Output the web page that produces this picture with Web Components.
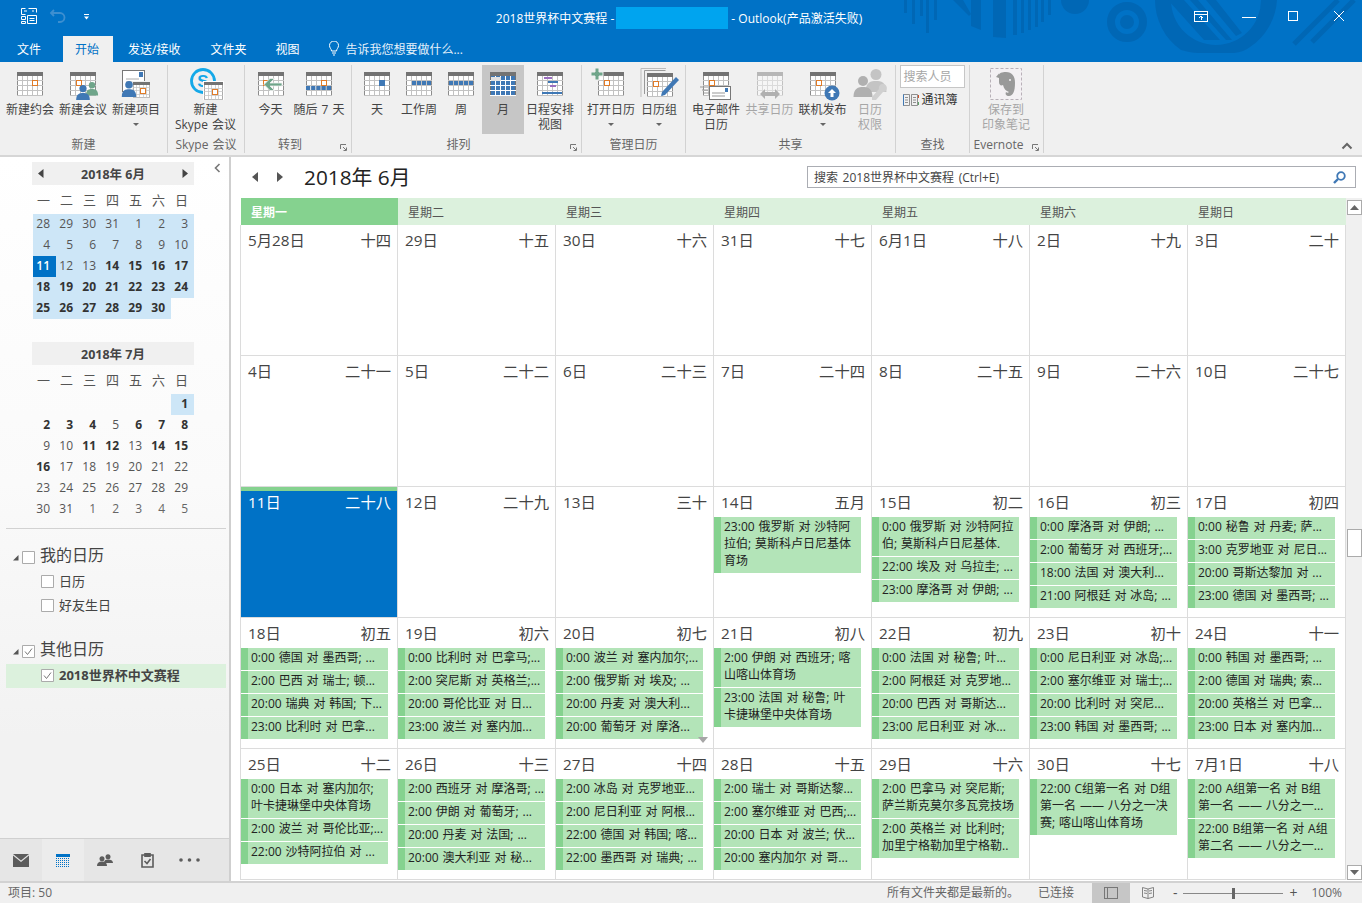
<!DOCTYPE html>
<html lang="zh">
<head>
<meta charset="utf-8">
<title>Outlook</title>
<style>
	html, body { margin: 0; height: 100%; overflow: hidden; background: #fff; }
	body { font-family: "Open Sans", "Noto Sans CJK SC", sans-serif; font-size: 12px; color: #444; }
	ol-app { height: 903px; }
</style>
</head>
<body>
<ol-app>
	<ol-titlebar></ol-titlebar>
	<ol-tabs></ol-tabs>
	<ol-ribbon>
		<rb-group label="新建" width="168">
			<rb-button width="53" label="新建约会" icon="appt"></rb-button>
			<rb-button width="53" label="新建会议" icon="meeting"></rb-button>
			<rb-button width="53" label="新建项目" icon="item" caret></rb-button>
		</rb-group>
		<rb-group label="Skype 会议" width="77">
			<rb-button width="76" label="新建&#10;Skype 会议" icon="skype"></rb-button>
		</rb-group>
		<rb-group label="转到" width="107" launcher>
			<rb-button width="43" label="今天" icon="today"></rb-button>
			<rb-button width="54" label="随后 7 天" icon="next7"></rb-button>
		</rb-group>
		<rb-group label="排列" width="230" launcher>
			<rb-button width="42" label="天" icon="day"></rb-button>
			<rb-button width="42" label="工作周" icon="workweek"></rb-button>
			<rb-button width="42" label="周" icon="week"></rb-button>
			<rb-button width="42" label="月" icon="month" active></rb-button>
			<rb-button width="52" label="日程安排&#10;视图" icon="schedule"></rb-button>
		</rb-group>
		<rb-group label="管理日历" width="104">
			<rb-button width="52" label="打开日历" icon="open" caret></rb-button>
			<rb-button width="44" label="日历组" icon="groups" caret></rb-button>
		</rb-group>
		<rb-group label="共享" width="210">
			<rb-button width="54" label="电子邮件&#10;日历" icon="email"></rb-button>
			<rb-button width="53" label="共享日历" icon="share" disabled></rb-button>
			<rb-button width="53" label="联机发布" icon="publish" caret></rb-button>
			<rb-button width="42" label="日历&#10;权限" icon="perm" disabled></rb-button>
		</rb-group>
		<rb-group label="查找" width="74"><rb-find></rb-find></rb-group>
		<rb-group label="Evernote" width="74" launcher>
			<rb-button width="66" label="保存到&#10;印象笔记" icon="evernote" disabled></rb-button>
		</rb-group>
	</ol-ribbon>
	<ol-body>
		<ol-sidebar>
			<mini-month title-text="2018年 6月" arrows></mini-month>
			<mini-month title-text="2018年 7月" july></mini-month>
		</ol-sidebar>
		<ol-main></ol-main>
	</ol-body>
	<ol-status></ol-status>
</ol-app>

<script>
const tpl = (css, html) => {
	const t = document.createElement('template');
	t.innerHTML = `<style>${css}</style>${html}`;
	return t;
};

/* ---------- ribbon icons ---------- */
const cal = (x, y, o = {}) => {
	const c = o.color || '#8c8c8c', top = o.top || '#737373', line = o.line || '#c2c2c2';
	let s = `<g shape-rendering="crispEdges"><rect x="${x + .5}" y="${y + .5}" width="25" height="23" fill="#fff" stroke="${c}"/>`;
	for (let i = 5; i < 25; i += 5) s += `<path d="M${x + i + .5} ${y + 4}v20" stroke="${line}"/>`;
	for (let i = 8; i < 24; i += 5) s += `<path d="M${x} ${y + i + .5}h26" stroke="${line}"/>`;
	s += `<rect x="${x}" y="${y}" width="26" height="4" fill="${top}"/></g>`;
	return s;
};
const orange = (x, y) => `<rect x="${x + .5}" y="${y + .5}" width="5" height="5" fill="#fff" stroke="#e07b28" stroke-width="1.2" shape-rendering="crispEdges"/>`;
const person = (cx, top, r, col) => `<circle cx="${cx}" cy="${top + r}" r="${r}" fill="${col}"/><path d="M${cx - r * 1.9} ${top + r * 4.2}c0-${r * 1.8} ${r}-${r * 2} ${r * 1.9}-${r * 2}s${r * 1.9} ${r * .2} ${r * 1.9} ${r * 2}z" fill="${col}"/>`;
const blue = '#3f78b5';
const envelope = (x, y, w, h) => `<rect x="${x + .5}" y="${y + .5}" width="${w}" height="${h}" fill="#fff" stroke="#777"/><rect x="${x + w - 5}" y="${y + 2}" width="3" height="4" fill="${blue}"/><path d="M${x + 3} ${y + h - 6}h${w - 8}M${x + 3} ${y + h - 3}h${w - 8}" stroke="#999"/>`;
const dashes = (x, y, n, w) => { let s = ''; for (let i = 0; i < n; i++) s += `<rect x="${x + i * (w + 1)}" y="${y}" width="${w}" height="4" fill="${blue}"/>`; return s; };

const ICONS = {
	appt: cal(9, 4) + orange(24, 12),
	meeting: cal(9, 4) + orange(15, 12) + person(31, 14, 3.2, '#6fa58a') + person(22, 17, 3.6, blue),
	item: `<rect x="8.500" y="2.500" width="22" height="21" fill="#fff" stroke="#777"/><rect x="25" y="4" width="4" height="5" fill="${blue}"/><path d="M12 11h13M12 14h13" stroke="#aaa"/>` + `<rect x="18" y="13" width="19" height="18" fill="#f0f0f0"/><g transform="translate(19 14) scale(.66)">${cal(0, 0)}</g>` + orange(26, 20) + person(15, 13, 3.8, blue),
	skype: `<circle cx="19" cy="13" r="11.500" fill="none" stroke="#14a8e8" stroke-width="2.800"/><text x="19" y="19" text-anchor="middle" font-family="Liberation Sans" font-weight="700" font-size="17" fill="#14a8e8">S</text><rect x="19" y="13" width="21" height="19" fill="#fff"/><g transform="translate(20 14) scale(.73)">${cal(0, 0)}</g>` + orange(28, 21),
	today: cal(9, 4) + orange(14, 12) + `<path d="M21 15h12v3H21l4.500 4.500h-4.500L15 16.500 21 10.500h4.500z" fill="#6fa58a" stroke="#f0f0f0" stroke-width=".8"/>`,
	next7: cal(9, 4) + orange(24, 12) + dashes(9, 18, 5, 4.200),
	day: cal(9, 4) + `<rect x="24" y="12" width="6" height="6" fill="${blue}"/>`,
	workweek: cal(9, 4) + dashes(15, 13, 4, 4),
	week: cal(9, 4) + dashes(10, 13, 5, 4),
	month: cal(9, 4, { color: '#737373', line: '#fff' }).replace('fill="#fff"', `fill="${blue}"`) + `<rect x="10" y="9" width="10" height="4" fill="#e3e3e3"/>`,
	schedule: cal(9, 4) + `<rect x="16" y="9" width="8" height="2" fill="#9b6fc0"/><rect x="20" y="13" width="10" height="2" fill="${blue}"/><rect x="22" y="17" width="6" height="2" fill="#9b6fc0"/><rect x="14" y="24" width="20" height="2" fill="${blue}"/>`,
	open: cal(9, 4) + orange(15, 12) + `<path d="M2 4h4V0h4v4h4v4h-4v4H6V8H2z" fill="#6fa58a" stroke="#f0f0f0"/>`,
	groups: `<path d="M7.500 26V2.500h21" fill="none" stroke="#999"/><path d="M5 29V0.500h25" fill="none" stroke="#bbb" transform="translate(-1 0)"/>` + cal(10, 5) + orange(16, 13) + `<path d="M39 9l3 3-14 15-4 1 1-4z" fill="${blue}"/>`,
	email: cal(9, 4) + orange(15, 12) + `<path d="M6 19h8M8 22h6M10 25h6" stroke="#999"/>` + envelope(15, 18, 21, 13),
	share: `<g opacity=".45">${cal(9, 4)}</g><path d="M12 26l5-5v3h10v-3l5 5-5 5v-3H17v3z" fill="#b0b0b0"/>`,
	publish: cal(9, 4) + orange(15, 12) + `<circle cx="31" cy="25" r="7.500" fill="${blue}"/><path d="M31 21l-4 4h2.500v4h3v-4H35z" fill="#fff"/>`,
	perm: person(28, 1, 5.500, '#c4c4c4') + person(15, 8, 5, '#b0b0b0') + `<path d="M24 29l7-8a4 4 0 1 1 4 3l-7 8h-4z" fill="#d0d0d0"/>`,
	evernote: `<rect x="6.500" y="0.500" width="31" height="31" fill="#f3f0f3" stroke="#b8b0b8" stroke-dasharray="3 2"/><path d="M15 7c0-2 3-3 7-3 6 0 9 4 9 11 0 8-2 13-6 13-3 0-4-2-3-4 1 1 2 1 3 0-3-1-5-3-6-7-2 1-4 0-4-3z" fill="#999"/><path d="M12 9l3-3.500V10z" fill="#999"/><circle cx="26" cy="12" r="1" fill="#f3f0f3"/>`,
};

/* ---------- app shell ---------- */
class OlApp extends HTMLElement {
	constructor() {
		super();
		this.attachShadow({ mode: 'open' }).appendChild(OlApp.template.content.cloneNode(true));
	}
}
OlApp.template = tpl(`:host { display: flex; flex-direction: column; width: 1362px; background: #0072c6; }`, `<slot></slot>`);

class OlTitlebar extends HTMLElement {
	constructor() {
		super();
		this.attachShadow({ mode: 'open' }).appendChild(OlTitlebar.template.content.cloneNode(true));
	}
}
OlTitlebar.template = tpl(`
	:host { display: block; position: relative; height: 36px; color: #fff; }
	.pattern { position: absolute; right: 0; top: 0; }
	.bar { position: relative; box-sizing: border-box; height: 36px; padding-right: 4px; display: flex; align-items: center; justify-content: center; font-size: 12px; }
	.mask { width: 112px; height: 22px; background: #00a4ef; margin-left: 2px; }
	.qat { position: absolute; left: 0; top: 0; }
	.win { position: absolute; right: 2px; top: 0; }
`, `
	<svg class="pattern" width="462" height="62" viewBox="900 0 462 62" fill="#0067b5">
		<path d="M904 0h3v13h-3zM912 0h3v24h-3zM920 0h3v16h-3zM926 0h3v33h-3zM934 0h3v20h-3z"/>
		<path d="M953 0h10l8 14-2 2zM971 0h10v30l-10-4zM993 0h13v38l-13-1zM1013 0h4v35h-4zM1021 0h3v33h-3zM1028 0h3v30h-3zM1035 0h3v27h-3zM1041 0h3v22h-3zM1048 0h3v15h-3z"/>
		<path d="M1061 0h28a14 14 0 0 1-28 0z"/>
		<circle cx="1127" cy="22" r="16" fill="none" stroke="#0067b5" stroke-width="8"/><circle cx="1127" cy="22" r="7"/>
		<path d="M1155 0a61 61 0 0 0 26 50q10 3 17 3h36q10-1 16-6a61 61 0 0 0 27-47h-16a45 45 0 0 1-90 0z"/>
		<path d="M1168 0l36 40h16l-36-40zM1190 0l36 40h6l-34-40zM1206 0l30 36 6-3-26-33z"/>
		<path d="M1294 44l44-44M1312 42l42-42" stroke="#0067b5" stroke-width="5" fill="none"/>
	</svg>
	<svg class="qat" width="100" height="36" fill="none" stroke="#fff">
		<path d="M25.500 8.500h-4v6h4M24 11h3M28.500 8.500h8v4M32 11h2" stroke-width="1"/>
		<path d="M21.500 16.500h4v3h-4zM21.500 21.500h4v2h-4zM27.500 15.500h9v8h-9zM29.500 18.500h5M29.500 20.500h5" stroke-width="1"/>
		<path d="M54 10l-3 3 3 3M51.500 13H60a4.500 4.500 0 0 1 0 9h-2" stroke="#3d8fd0" stroke-width="1.800"/>
		<path d="M84 14.500h5" stroke-width="1"/><path d="M84 16.500h5l-2.500 3z" fill="#fff" stroke="none"/>
	</svg>
	<div class="bar"><span>2018世界杯中文赛程 -</span><span class="mask"></span><span>&nbsp;- Outlook(产品激活失败)</span></div>
	<svg class="win" width="180" height="36" fill="none" stroke="#fff" shape-rendering="crispEdges">
		<path d="M14.500 11.500h13v10h-13zM14.500 14.500h13M21 20v-4M19 18l2-2 2 2" stroke-width="1"/>
		<path d="M62 17h14" stroke-width="1"/>
		<rect x="108.500" y="11.500" width="9" height="9"/>
		<path d="M154 11l10 10M164 11l-10 10" stroke-width="1" shape-rendering="auto"/>
	</svg>
`);

class OlTabs extends HTMLElement {
	constructor() {
		super();
		this.attachShadow({ mode: 'open' }).appendChild(OlTabs.template.content.cloneNode(true));
	}
}
OlTabs.template = tpl(`
	:host { display: flex; align-items: stretch; height: 26px; color: #fff; font-size: 12px; position: relative; }
	span { display: flex; align-items: center; padding: 0 14px; }
	.file { padding: 0 22px 0 17px; }
	.on { background: #f0f0f0; color: #0072c6; padding: 0 14px 0 12px; }
	.tell { padding: 0 0 0 1px; margin-left: 14px; gap: 5px; color: #e4f0fa; }
	svg { display: block; }
`, `
	<span class="file">文件</span><span class="on">开始</span><span style="padding-left:15px">发送/接收</span><span style="padding-left:16px">文件夹</span><span style="padding-left:15px">视图</span>
	<span class="tell"><svg width="12" height="15" fill="none" stroke="#fff"><path d="M3.500 10c0-2-2-3-2-5.500a4.500 4.500 0 0 1 9 0c0 2.500-2 3.500-2 5.500zM4 12h4M5 14h2"/></svg>告诉我您想要做什么...</span>
`);

class OlRibbon extends HTMLElement {
	constructor() {
		super();
		this.attachShadow({ mode: 'open' }).appendChild(OlRibbon.template.content.cloneNode(true));
	}
}
OlRibbon.template = tpl(`
	:host { display: flex; position: relative; box-sizing: border-box; height: 95px; padding-top: 3px; background: #f0f0f0; border-bottom: 2px solid #d6d6d6; }
	svg { position: absolute; right: 9px; bottom: 5px; }
`, `<slot></slot><svg width="12" height="8" fill="none" stroke="#666" stroke-width="2"><path d="M1.500 6.500L6 2l4.500 4.500"/></svg>`);

class RbGroup extends HTMLElement {
	constructor() {
		super();
		this.attachShadow({ mode: 'open' }).appendChild(RbGroup.template.content.cloneNode(true));
	}
	connectedCallback() {
		this.style.width = `${this.getAttribute('width')}px`;
		this.shadowRoot.querySelector('.name').textContent = this.getAttribute('label');
	}
}
RbGroup.template = tpl(`
	:host { display: flex; flex-direction: column; position: relative; box-sizing: border-box; height: 88px; border-right: 1px solid #d2d2d2; }
	.body { display: flex; justify-content: center; box-sizing: border-box; height: 72px; padding-right: 1px; }
	.name { text-align: center; line-height: 16px; color: #666; white-space: nowrap; word-spacing: 1px; }
	:host([launcher]) .name { padding-right: 16px; }
	.launch { display: none; position: absolute; right: 3px; bottom: 1px; }
	:host([launcher]) .launch { display: block; }
`, `
	<div class="body"><slot></slot></div>
	<div class="name"></div>
	<svg class="launch" width="8" height="8" fill="none" stroke="#777"><path d="M.500 5V.500H6"/><path d="M3 3l3 3M3.500 6.500h3v-3"/></svg>
`);

class RbButton extends HTMLElement {
	constructor() {
		super();
		this.attachShadow({ mode: 'open' }).appendChild(RbButton.template.content.cloneNode(true));
	}
	connectedCallback() {
		this.style.width = `${this.getAttribute('width')}px`;
		const root = this.shadowRoot;
		root.querySelector('svg').innerHTML = ICONS[this.getAttribute('icon')] || '';
		root.querySelector('.label').textContent = this.getAttribute('label');
		root.querySelector('.caret').hidden = !this.hasAttribute('caret');
	}
}
RbButton.template = tpl(`
	:host { display: flex; flex-direction: column; align-items: center; height: 69px; color: #444; }
	:host([active]) { background: #c6c6c6; }
	:host([disabled]) { color: #a6a6a6; }
	svg { display: block; margin-top: 3px; flex: none; overflow: visible; }
	.label { line-height: 15px; white-space: pre; text-align: center; word-spacing: 1px; }
	.caret { width: 0; height: 0; margin-top: 6px; border: 3px solid transparent; border-top: 3px solid #666; border-bottom: 0; }
	[hidden] { display: none; }
`, `<svg width="44" height="34"></svg><div class="label"></div><div class="caret"></div>`);

class RbFind extends HTMLElement {
	constructor() {
		super();
		this.attachShadow({ mode: 'open' }).appendChild(RbFind.template.content.cloneNode(true));
	}
}
RbFind.template = tpl(`
	:host { display: flex; flex-direction: column; align-items: flex-start; width: 65px; }
	.box { box-sizing: border-box; width: 65px; height: 23px; background: #fff; border: 1px solid #c6c6c6; color: #a6a6a6; padding-left: 3px; line-height: 21px; }
	.book { display: flex; align-items: center; gap: 3px; margin: 1px 0 0 3px; line-height: 22px; color: #333; }
`, `
	<div class="box">搜索人员</div>
	<div class="book"><svg width="16" height="12" fill="none" stroke="#777"><path d="M.500.500h6v11h-6zM8.500.500h6v11h-6zM2 3.500h3M2 6h3M2 8.500h3M10 3.500h3M10 6h3M10 8.500h3" stroke-width=".8"/><path d="M.500.500v11" stroke="#3f78b5"/><path d="M15.500 1v3" stroke="#d0502a"/><path d="M15.500 8v3" stroke="#5ea56a"/></svg>通讯簿</div>
`);

/* ---------- body ---------- */
class OlBody extends HTMLElement {
	constructor() {
		super();
		this.attachShadow({ mode: 'open' }).appendChild(OlBody.template.content.cloneNode(true));
	}
}
OlBody.template = tpl(`:host { display: flex; height: 725px; background: #fff; }`, `<slot></slot>`);

class OlSidebar extends HTMLElement {
	constructor() {
		super();
		this.attachShadow({ mode: 'open' }).appendChild(OlSidebar.template.content.cloneNode(true));
	}
}
const chk = (on) => `<svg class="chk" width="13" height="13" fill="#fff" stroke="#ababab"><path d="M.500.500h12v12H.500z"/>${on ? '<path d="M3 6.500l2.500 3L10 3.500" fill="none" stroke="#777"/>' : ''}</svg>`;
const tri = `<svg class="tri" width="7" height="7"><path d="M6.500 1v5.500H1z" fill="#555"/></svg>`;
OlSidebar.template = tpl(`
	:host { display: flex; flex-direction: column; position: relative; box-sizing: border-box; width: 231px; padding-top: 5px; border-right: 2px solid #cfcfcf; background: linear-gradient(#fff, #fafafa 45%, #f2f2f2 80%); }
	.months { padding-left: 32px; }
	.collapse { position: absolute; left: 214px; top: 6px; }
	.rule { height: 1px; margin: 6px 3px 0 6px; background: #d2d2d2; }
	.tree { flex: 1; padding: 17px 0 0; }
	.row { display: flex; align-items: center; height: 24px; color: #444; font-size: 13px; padding-left: 41px; gap: 5px; }
	.row span { padding-bottom: 3px; }
	.top { font-size: 16px; padding-left: 12px; gap: 0; }
	.top span { padding-bottom: 7px; }
	.top .chk { margin: 0 5px 0 3px; }
	.gap { margin-top: 22px; }
	.sel { margin: 0 3px 0 6px; padding-left: 35px; background: #dcf1dd; font-weight: 700; }
	.nav { display: flex; height: 42px; background: #e6e6e6; border-top: 1px solid #d0d0d0; }
	.nav div { width: 42px; display: flex; align-items: center; justify-content: center; }
	.nav .on { background: #ececec; }
`, `
	<div class="months"><slot></slot></div>
	<svg class="collapse" width="7" height="10" fill="none" stroke="#777" stroke-width="1.600"><path d="M5.500 1L1.500 5l4 4"/></svg>
	<div class="rule"></div>
	<div class="tree">
		<div class="row top">${tri}${chk(false)}<span>我的日历</span></div>
		<div class="row">${chk(false)}<span>日历</span></div>
		<div class="row">${chk(false)}<span>好友生日</span></div>
		<div class="row top gap">${tri}${chk(true)}<span>其他日历</span></div>
		<div class="row sel">${chk(true)}<span>2018世界杯中文赛程</span></div>
	</div>
	<div class="nav">
		<div><svg width="16" height="13"><path d="M0 0h16L8 6.500z" fill="#5c5c5c"/><path d="M0 1.500l8 6.500 8-6.500V13H0z" fill="#5c5c5c"/></svg></div>
		<div class="on"><svg width="14" height="13" shape-rendering="crispEdges"><path d="M0 0h14v3H0z" fill="#0072c6"/><path d="M0 4.500h14M0 6.500h14M0 8.500h14M0 10.500h14M0 12.500h14" stroke="#0072c6" stroke-dasharray="1 1"/></svg></div>
		<div><svg width="16" height="12" fill="#5c5c5c"><circle cx="11" cy="2.800" r="2.500"/><path d="M7 9c0-2.500 1.500-3.500 4-3.500s5 1 5 3.500z"/><circle cx="5" cy="4.800" r="2.500"/><path d="M0 12c0-3 1.500-4.500 5-4.500s5 1.500 5 4.500z"/></svg></div>
		<div><svg width="13" height="15" fill="none" stroke="#5c5c5c" stroke-width="1.600"><path d="M4 2H1v12h11V2H9"/><path d="M4 .800h5v2.500H4z" fill="#5c5c5c"/><path d="M3.500 8l2.500 2.500L9.500 6"/></svg></div>
		<div><svg width="21" height="4" fill="#5c5c5c"><circle cx="2" cy="2" r="1.800"/><circle cx="10.500" cy="2" r="1.800"/><circle cx="19" cy="2" r="1.800"/></svg></div>
	</div>
`);

class MiniMonth extends HTMLElement {
	constructor() {
		super();
		this.attachShadow({ mode: 'open' }).appendChild(MiniMonth.template.content.cloneNode(true));
	}
	connectedCallback() {
		const root = this.shadowRoot;
		root.querySelector('.title').textContent = this.getAttribute('title-text');
		const july = this.hasAttribute('july');
		const cells = [];
		if (july) {
			const bold = [1, 2, 3, 4, 6, 7, 8, 11, 12, 14, 15, 16];
			for (let i = 0; i < 6; i++) cells.push({ t: '' });
			for (let d = 1; d <= 31; d++) cells.push({ t: d, b: bold.includes(d), s: d === 1 });
			for (let d = 1; d <= 5; d++) cells.push({ t: d, f: true });
		} else {
			[28, 29, 30, 31].forEach((d) => cells.push({ t: d, s: true }));
			for (let d = 1; d <= 30; d++) cells.push({ t: d, s: true, b: d >= 14, n: d === 11 });
		}
		root.querySelector('.week').innerHTML = [...'一二三四五六日'].map((w) => `<span>${w}</span>`).join('');
		root.querySelector('.days').innerHTML = cells.map((c) => `<span class="${c.s ? 's ' : ''}${c.b ? 'b ' : ''}${c.n ? 'n ' : ''}${c.f ? 'f' : ''}">${c.t}</span>`).join('');
	}
}
MiniMonth.template = tpl(`
	:host { display: block; width: 162px; height: 178px; margin-bottom: 2px; }
	.head { display: flex; align-items: center; justify-content: center; position: relative; height: 23px; background: #f0f0f0; font-weight: 700; font-size: 12.500px; color: #444; }
	.arrow { display: none; position: absolute; top: 7px; }
	:host([arrows]) .arrow { display: block; }
	.prev { left: 6px; } .next { right: 6px; }
	.week { display: grid; grid-template-columns: repeat(7, 23px); height: 29px; align-items: center; font-size: 13px; color: #555; text-align: center; }
	.days { display: grid; grid-template-columns: repeat(7, 23px); grid-auto-rows: 21px; margin-left: 1px; line-height: 20px; text-align: right; color: #555; }
	.days span { padding-right: 6px; }
	.s { background: #cde6f7; }
	.b { font-weight: 700; color: #333; }
	.n { background: #0072c6; color: #fff; font-weight: 600; }
	.f { color: #666; }
`, `
	<div class="head">
		<svg class="arrow prev" width="6" height="9"><path d="M5.500 0v9L0 4.500z" fill="#444"/></svg>
		<span class="title"></span>
		<svg class="arrow next" width="6" height="9"><path d="M.500 0v9L6 4.500z" fill="#444"/></svg>
	</div>
	<div class="week"></div>
	<div class="days"></div>
`);

/* ---------- month view ---------- */
const WEEKS = [
	[['5月28日', '十四'], ['29日', '十五'], ['30日', '十六'], ['31日', '十七'], ['6月1日', '十八'], ['2日', '十九'], ['3日', '二十']],
	[['4日', '二十一'], ['5日', '二十二'], ['6日', '二十三'], ['7日', '二十四'], ['8日', '二十五'], ['9日', '二十六'], ['10日', '二十七']],
	[['11日', '二十八'], ['12日', '二十九'], ['13日', '三十'], ['14日', '五月', ['23:00 俄罗斯 对 沙特阿\n拉伯; 莫斯科卢日尼基体\n育场']],
		['15日', '初二', ['0:00 俄罗斯 对 沙特阿拉\n伯; 莫斯科卢日尼基体.', '22:00 埃及 对 乌拉圭; ...', '23:00 摩洛哥 对 伊朗; ...']],
		['16日', '初三', ['0:00 摩洛哥 对 伊朗; ...', '2:00 葡萄牙 对 西班牙;...', '18:00 法国 对 澳大利...', '21:00 阿根廷 对 冰岛; ...']],
		['17日', '初四', ['0:00 秘鲁 对 丹麦; 萨...', '3:00 克罗地亚 对 尼日...', '20:00 哥斯达黎加 对 ...', '23:00 德国 对 墨西哥; ...']]],
	[['18日', '初五', ['0:00 德国 对 墨西哥; ...', '2:00 巴西 对 瑞士; 顿...', '20:00 瑞典 对 韩国; 下...', '23:00 比利时 对 巴拿...']],
		['19日', '初六', ['0:00 比利时 对 巴拿马;...', '2:00 突尼斯 对 英格兰;...', '20:00 哥伦比亚 对 日...', '23:00 波兰 对 塞内加...']],
		['20日', '初七', ['0:00 波兰 对 塞内加尔;...', '2:00 俄罗斯 对 埃及; ...', '20:00 丹麦 对 澳大利...', '20:00 葡萄牙 对 摩洛...'], true],
		['21日', '初八', ['2:00 伊朗 对 西班牙; 喀\n山喀山体育场', '23:00 法国 对 秘鲁; 叶\n卡捷琳堡中央体育场']],
		['22日', '初九', ['0:00 法国 对 秘鲁; 叶...', '2:00 阿根廷 对 克罗地...', '20:00 巴西 对 哥斯达...', '23:00 尼日利亚 对 冰...']],
		['23日', '初十', ['0:00 尼日利亚 对 冰岛;...', '2:00 塞尔维亚 对 瑞士;...', '20:00 比利时 对 突尼...', '23:00 韩国 对 墨西哥; ...']],
		['24日', '十一', ['0:00 韩国 对 墨西哥; ...', '2:00 德国 对 瑞典; 索...', '20:00 英格兰 对 巴拿...', '23:00 日本 对 塞内加...']]],
	[['25日', '十二', ['0:00 日本 对 塞内加尔;\n叶卡捷琳堡中央体育场', '2:00 波兰 对 哥伦比亚;...', '22:00 沙特阿拉伯 对 ...']],
		['26日', '十三', ['2:00 西班牙 对 摩洛哥; ...', '2:00 伊朗 对 葡萄牙; ...', '20:00 丹麦 对 法国; ...', '20:00 澳大利亚 对 秘...']],
		['27日', '十四', ['2:00 冰岛 对 克罗地亚...', '2:00 尼日利亚 对 阿根...', '22:00 德国 对 韩国; 喀...', '22:00 墨西哥 对 瑞典; ...']],
		['28日', '十五', ['2:00 瑞士 对 哥斯达黎...', '2:00 塞尔维亚 对 巴西;...', '20:00 日本 对 波兰; 伏...', '20:00 塞内加尔 对 哥...']],
		['29日', '十六', ['2:00 巴拿马 对 突尼斯;\n萨兰斯克莫尔多瓦竞技场', '2:00 英格兰 对 比利时;\n加里宁格勒加里宁格勒..']],
		['30日', '十七', ['22:00 C组第一名 对 D组\n第一名 —— 八分之一决\n赛; 喀山喀山体育场']],
		['7月1日', '十八', ['2:00 A组第一名 对 B组\n第一名 —— 八分之一...', '22:00 B组第一名 对 A组\n第二名 —— 八分之一...']]],
];

class CalEvent extends HTMLElement {
	constructor() {
		super();
		this.attachShadow({ mode: 'open' }).appendChild(CalEvent.template.content.cloneNode(true));
	}
}
CalEvent.template = tpl(`
	:host { display: block; box-sizing: border-box; width: 147px; padding: 1px 0 4px 10px; background: linear-gradient(90deg, #85d28f 7px, #b3e4b8 7px); color: #222; line-height: 17px; white-space: pre; word-spacing: .8px; overflow: hidden; }
`, `<slot></slot>`);

class CalDay extends HTMLElement {
	constructor() {
		super();
		this.attachShadow({ mode: 'open' }).appendChild(CalDay.template.content.cloneNode(true));
	}
	connectedCallback() {
		this.shadowRoot.querySelector('.d').textContent = this.getAttribute('date');
		this.shadowRoot.querySelector('.l').textContent = this.getAttribute('lunar');
	}
}
CalDay.template = tpl(`
	:host { display: flex; flex-direction: column; gap: 1px; position: relative; box-sizing: border-box; border-right: 1px solid #dcdcdc; border-bottom: 1px solid #dcdcdc; background: #fff; overflow: hidden; color: #444; }
	:host([today]) { background: #0072c6; color: #fff; box-shadow: inset 0 4px 0 #85d28f; }
	.top { display: flex; justify-content: space-between; height: 29px; line-height: 30px; padding: 0 6px 0 7px; font-size: 15.300px; }
	:host([more])::after { content: ""; position: absolute; right: 5px; bottom: 5px; border: 5px solid transparent; border-top: 6px solid #a6a6a6; border-bottom: 0; }
`, `<div class="top"><span class="d"></span><span class="l"></span></div><slot></slot>`);

class OlMain extends HTMLElement {
	constructor() {
		super();
		this.attachShadow({ mode: 'open' }).appendChild(OlMain.template.content.cloneNode(true));
		const heads = ['星期一', '星期二', '星期三', '星期四', '星期五', '星期六', '星期日'];
		this.shadowRoot.querySelector('.heads').innerHTML = heads.map((h, i) => `<span class="${i ? '' : 'on'}">${h}</span>`).join('');
		const grid = this.shadowRoot.querySelector('.grid');
		WEEKS.forEach((week) => week.forEach(([date, lunar, events, more]) => {
			const day = document.createElement('cal-day');
			day.setAttribute('date', date);
			day.setAttribute('lunar', lunar);
			if (date === '11日') day.setAttribute('today', '');
			if (more) day.setAttribute('more', '');
			(events || []).forEach((text) => {
				const ev = document.createElement('cal-event');
				ev.textContent = text;
				day.appendChild(ev);
			});
			grid.appendChild(day);
		}));
	}
}
OlMain.template = tpl(`
	:host { display: flex; flex-direction: column; width: 1131px; background: #fff; position: relative; }
	.tools { display: flex; align-items: center; height: 41px; padding: 0 6px 0 21px; }
	.nav { display: flex; gap: 17px; align-items: center; }
	.month { font-size: 20.800px; color: #222; margin-left: 21px; flex: 1; line-height: 28px; }
	.search { box-sizing: border-box; display: flex; align-items: center; justify-content: space-between; width: 549px; height: 22px; border: 1px solid #abadb3; padding: 0 9px 0 6px; color: #444; word-spacing: 1.500px; }
	.view { display: flex; flex: 1; padding-left: 10px; }
	.cal { width: 1105px; }
	.heads, .grid { display: grid; grid-template-columns: 157px repeat(6, 158px); }
	.heads { height: 27px; background: #dcf1dd; line-height: 29px; color: #555; }
	.heads span { padding-left: 10px; }
	.heads .on { background: #85d28f; color: #fff; font-weight: 600; }
	.grid { grid-auto-rows: 131px; box-shadow: -1px 0 0 #dcdcdc; }
	.scroll { display: flex; flex-direction: column; width: 16px; background: #f0f0f0; padding: 2px 0 0; box-sizing: border-box; height: 682px; }
	.btn { box-sizing: border-box; display: flex; align-items: center; justify-content: center; width: 15px; height: 15px; margin-left: 1px; background: #fff; border: 1px solid #ababab; flex: none; }
	.thumb { box-sizing: border-box; width: 15px; height: 28px; margin: 314px 0 auto 1px; background: #fff; border: 1px solid #ababab; }
`, `
	<div class="tools">
		<div class="nav">
			<svg width="7" height="10"><path d="M6 0v10L0 5z" fill="#555"/></svg>
			<svg width="7" height="10"><path d="M1 0v10l6-5z" fill="#555"/></svg>
		</div>
		<div class="month">2018年 6月</div>
		<div class="search"><span>搜索 2018世界杯中文赛程 (Ctrl+E)</span>
			<svg width="13" height="13" fill="none" stroke="#3f78b5" stroke-width="1.800"><circle cx="8" cy="5" r="3.800"/><path d="M5 8l-4 4" stroke-width="2.400"/></svg>
		</div>
	</div>
	<div class="view">
		<div class="cal"><div class="heads"></div><div class="grid"></div></div>
		<div class="scroll">
			<div class="btn"><svg width="9" height="5"><path d="M4.500 0L9 5H0z" fill="#666"/></svg></div>
			<div class="thumb"></div>
			<div class="btn"><svg width="9" height="5"><path d="M0 0h9L4.500 5z" fill="#666"/></svg></div>
		</div>
	</div>
`);

class OlStatus extends HTMLElement {
	constructor() {
		super();
		this.attachShadow({ mode: 'open' }).appendChild(OlStatus.template.content.cloneNode(true));
	}
}
OlStatus.template = tpl(`
	:host { display: flex; align-items: center; box-sizing: border-box; height: 22px; background: #f0f0f0; border-top: 2px solid #d2d2d2; padding-left: 8px; color: #666; white-space: nowrap; }
	.t { padding-bottom: 2px; }
	.grow { flex: 1; }
	.conn { margin-left: 19px; }
	.view { display: flex; align-items: center; justify-content: center; width: 38px; height: 20px; margin-left: 18px; background: #c6c6c6; }
	.read { margin: 0 18px 0 11px; }
	.zoom { display: flex; align-items: center; }
	.track { position: relative; width: 100px; height: 1px; margin: 0 6px; background: #888; }
	.track i { position: absolute; left: 49px; top: -5px; width: 3px; height: 11px; background: #666; }
	.pct { margin: 0 20px 0 14px; }
	b { font-weight: 400; font-size: 14px; line-height: 14px; color: #555; }
`, `
	<span class="t">项目: 50</span><span class="grow"></span>
	<span class="t">所有文件夹都是最新的。</span><span class="t conn">已连接</span>
	<span class="view"><svg width="14" height="12" fill="none" stroke="#777" shape-rendering="crispEdges"><path d="M.500.500h13v11H.500zM3.500.500v11"/></svg></span>
	<span class="view" style="background:none;width:auto;margin-left:0"><svg class="read" width="14" height="12" fill="none" stroke="#777"><path d="M7 2L1.500.500v9.500L7 11.500l5.500-1.500V.500zM7 2v9.500M3 3.500l3 .500M3 6l3 .500M8 4l3-.500M8 6.500l3-.500" stroke-width=".9"/></svg></span>
	<span class="zoom"><b>-</b><span class="track"><i></i></span><b>+</b></span>
	<span class="t pct">100%</span>
`);

customElements.define('ol-app', OlApp);
customElements.define('ol-titlebar', OlTitlebar);
customElements.define('ol-tabs', OlTabs);
customElements.define('ol-ribbon', OlRibbon);
customElements.define('rb-group', RbGroup);
customElements.define('rb-button', RbButton);
customElements.define('rb-find', RbFind);
customElements.define('ol-body', OlBody);
customElements.define('ol-sidebar', OlSidebar);
customElements.define('mini-month', MiniMonth);
customElements.define('cal-event', CalEvent);
customElements.define('cal-day', CalDay);
customElements.define('ol-main', OlMain);
customElements.define('ol-status', OlStatus);
</script>
</body>
</html>
